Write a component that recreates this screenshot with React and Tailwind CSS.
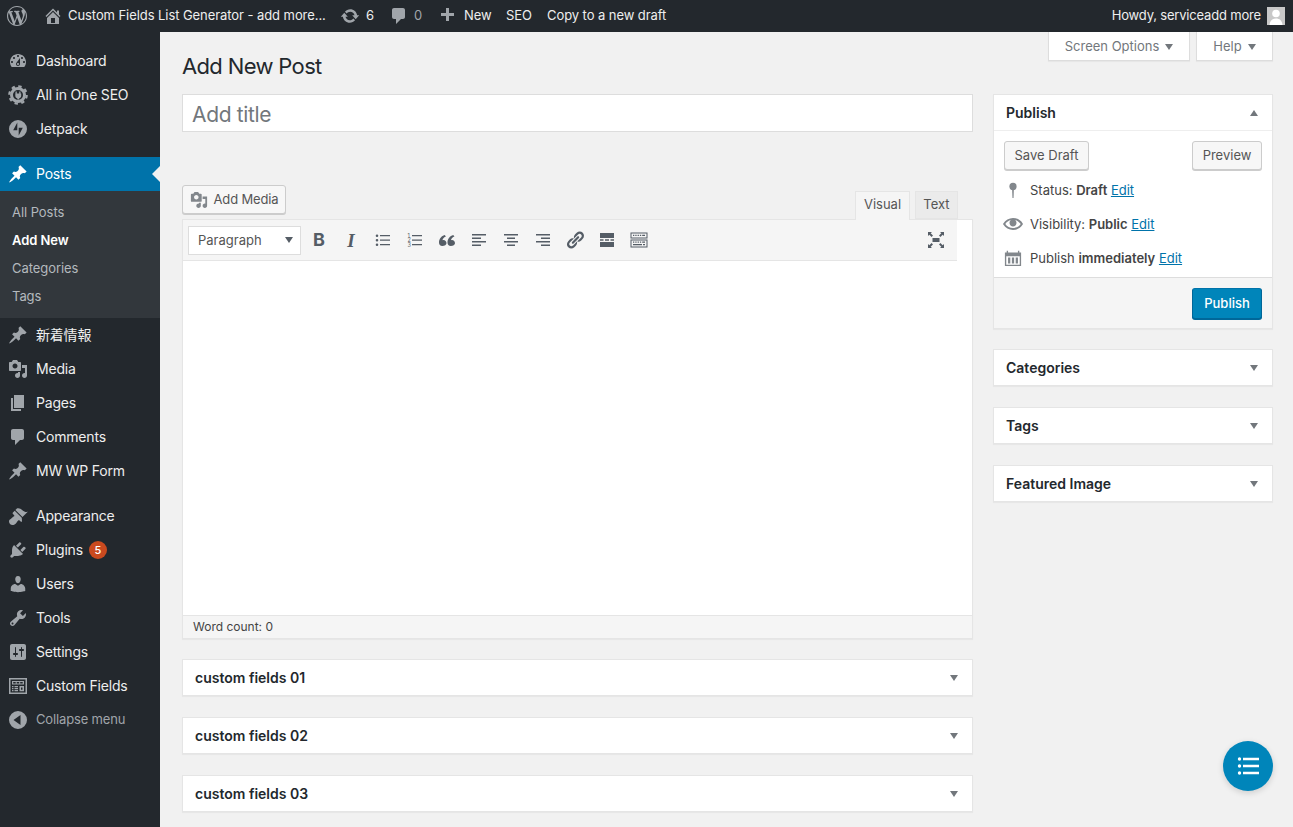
import React from "react";

const P = {
  wp: "M20 10c0-5.51-4.49-10-10-10C4.48 0 0 4.49 0 10c0 5.52 4.48 10 10 10 5.51 0 10-4.48 10-10zM7.78 15.37L4.37 6.22c.55-.02 1.17-.08 1.17-.08.5-.06.44-1.13-.06-1.11 0 0-1.45.11-2.37.11-.18 0-.37 0-.58-.01C4.12 2.69 6.87 1.11 10 1.11c2.33 0 4.45.87 6.05 2.34-.68-.11-1.65.39-1.65 1.58 0 .74.45 1.36.9 2.1.35.61.55 1.36.55 2.46 0 1.49-1.4 5-1.4 5l-3.03-8.37c.54-.02.82-.17.82-.17.5-.05.44-1.25-.06-1.22 0 0-1.44.12-2.38.12-.87 0-2.33-.12-2.33-.12-.5-.03-.56 1.2-.06 1.22l.92.08 1.26 3.41zM17.41 10c.24-.64.74-1.87.43-4.25.7 1.29 1.05 2.71 1.05 4.25 0 3.29-1.73 6.24-4.4 7.78.97-2.59 1.94-5.2 2.92-7.78zM6.1 18.09C3.12 16.65 1.11 13.53 1.11 10c0-1.3.23-2.48.72-3.59C3.25 10.3 4.67 14.2 6.1 18.09zm4.03-6.63l2.58 6.98c-.86.29-1.76.45-2.71.45-.79 0-1.57-.11-2.29-.33.81-2.38 1.62-4.74 2.42-7.1z",
  home: "M16 8.5l1.53 1.53-1.06 1.06L10 4.62l-6.47 6.47-1.06-1.06L10 2.5l4 4v-2h2v4zm-6-2.46l6 5.99V18H4v-5.97zM12 17v-5H8v5h4z",
  update: "M10.2 3.28c3.53 0 6.43 2.61 6.92 6h2.08l-3.5 4-3.5-4h2.32c-.45-1.97-2.21-3.45-4.32-3.45-1.45 0-2.73.71-3.54 1.78L4.95 5.66C6.23 4.2 8.11 3.28 10.2 3.28zm-.4 13.44c-3.52 0-6.43-2.61-6.92-6H.8l3.5-4c1.17 1.33 2.33 2.67 3.5 4H5.48c.45 1.97 2.21 3.45 4.32 3.45 1.45 0 2.73-.71 3.54-1.78l1.71 1.95c-1.28 1.46-3.15 2.38-5.25 2.38z",
  comment: "M5 2h9c1.1 0 2 .9 2 2v7c0 1.1-.9 2-2 2h-2l-5 5v-5H5c-1.1 0-2-.9-2-2V4c0-1.1.9-2 2-2z",
  plus: "M17 7v3h-5v5H9v-5H4V7h5V2h3v5h5z",
  dashboard: "M3.76 16h12.48c1.1-1.37 1.76-3.11 1.76-5 0-4.42-3.58-8-8-8s-8 3.58-8 8c0 1.89.66 3.63 1.76 5zM10 4c.55 0 1 .45 1 1s-.45 1-1 1-1-.45-1-1 .45-1 1-1zM6 6c.55 0 1 .45 1 1s-.45 1-1 1-1-.45-1-1 .45-1 1-1zm8 0c.55 0 1 .45 1 1s-.45 1-1 1-1-.45-1-1 .45-1 1-1zm-5.37 5.55L12 7v6c0 1.1-.9 2-2 2s-2-.9-2-2c0-.57.24-1.08.63-1.45zM4 10c.55 0 1 .45 1 1s-.45 1-1 1-1-.45-1-1 .45-1 1-1zm12 0c.55 0 1 .45 1 1s-.45 1-1 1-1-.45-1-1 .45-1 1-1zm-5 3c0-.55-.45-1-1-1s-1 .45-1 1 .45 1 1 1 1-.45 1-1z",
  jetpack: "M10 1a9 9 0 1 0 0 18 9 9 0 0 0 0-18zM9.3 11.2H5.2l4.1-7.6v7.6zm1.4 5.2V8.8h4.1l-4.1 7.6z",
  pin: "M10.44 3.02l1.82-1.82 6.36 6.35-1.83 1.82c-1.05-.68-2.48-.57-3.41.36l-.75.75c-.92.93-1.04 2.35-.35 3.41l-1.83 1.82-2.41-2.41-2.8 2.79c-.42.42-3.38 2.71-3.8 2.29s1.86-3.39 2.28-3.81l2.79-2.79L4.1 9.36l1.83-1.82c1.05.69 2.48.57 3.4-.36l.75-.75c.93-.92 1.05-2.35.36-3.41z",
  media: "M13 11V4c0-.55-.45-1-1-1h-1.67L9 1H5L3.67 3H2c-.55 0-1 .45-1 1v7c0 .55.45 1 1 1h10c.55 0 1-.45 1-1zM7 4.5c1.38 0 2.5 1.12 2.5 2.5S8.38 9.5 7 9.5 4.5 8.38 4.5 7 5.62 4.5 7 4.5zM14 6h5v10.5c0 1.38-1.12 2.5-2.5 2.5S14 17.88 14 16.5s1.12-2.5 2.5-2.5c.17 0 .34.02.5.05V9h-3V6zm-4 8.05V13h2v3.5c0 1.38-1.12 2.5-2.5 2.5S7 17.88 7 16.5 8.12 14 9.5 14c.17 0 .34.02.5.05z",
  page: "M6 15V2h10v13H6zm-1 1h8v2H3V5h2v11z",
  appearance: "M14.48 11.06L7.41 3.99l1.5-1.5c.5-.56 2.3-.47 3.51.32 1.21.8 1.43 1.28 2.91 2.1 1.18.64 2.45 1.26 4.45.85zm-.71.71L6.7 4.7 4.93 6.47c-.39.39-.39 1.02 0 1.41l1.06 1.06c.39.39.39 1.03 0 1.42-.6.6-1.43 1.11-2.21 1.69-.35.26-.7.53-1.01.84C1.43 13.23 1 14.37 1 15.5 1 17.43 2.57 19 4.5 19c1.13 0 2.27-.43 3.13-1.28.31-.31.58-.66.84-1.01.58-.78 1.09-1.61 1.69-2.21.39-.39 1.03-.39 1.42 0l1.06 1.06c.39.39 1.02.39 1.41 0z",
  plugin: "M13.11 4.36L9.87 7.6 8 5.73l3.24-3.24c.35-.34 1.05-.2 1.56.32.52.51.66 1.21.31 1.55zm-8 1.77l.91-1.12 9.01 9.01-1.19.84c-.71.71-2.63 1.16-3.82 1.16H6.14L4.9 17.26c-.59.59-1.54.59-2.12 0-.59-.58-.59-1.53 0-2.12l1.24-1.24v-3.88c0-1.13.4-3.19 1.09-3.89zm7.26 3.97l3.24-3.24c.34-.35 1.04-.21 1.55.31.52.51.66 1.21.31 1.55l-3.24 3.25z",
  users: "M10 9.25c-2.27 0-2.73-3.44-2.73-3.44C7 4.02 7.82 2 9.97 2c2.16 0 2.98 2.02 2.71 3.81 0 0-.41 3.44-2.68 3.44zm0 2.57L12.72 10c2.39 0 4.52 2.33 4.52 4.53v2.49s-3.65 1.13-7.24 1.13c-3.65 0-7.24-1.13-7.24-1.13v-2.49c0-2.25 1.94-4.48 4.47-4.48z",
  tools: "M16.68 9.77c-1.34 1.34-3.3 1.67-4.95.99l-5.41 6.52c-.99.99-2.59.99-3.58 0s-.99-2.59 0-3.57l6.52-5.42c-.68-1.65-.35-3.61.99-4.95 1.28-1.28 3.12-1.62 4.72-1.06l-2.89 2.89 2.82 2.82 2.86-2.87c.53 1.58.18 3.39-1.08 4.65zM3.81 16.21c.4.39 1.04.39 1.43 0 .4-.4.4-1.04 0-1.43-.39-.4-1.03-.4-1.43 0-.39.39-.39 1.03 0 1.43z",
  settings: "M18 16V4c0-1.1-.9-2-2-2H4c-1.1 0-2 .9-2 2v12c0 1.1.9 2 2 2h12c1.1 0 2-.9 2-2zM8 11h1c.55 0 1 .45 1 1s-.45 1-1 1H8v1.5c0 .28-.22.5-.5.5s-.5-.22-.5-.5V13H6c-.55 0-1-.45-1-1s.45-1 1-1h1V5.5c0-.28.22-.5.5-.5s.5.22.5.5V11zm5-2h-1c-.55 0-1-.45-1-1s.45-1 1-1h1V5.5c0-.28.22-.5.5-.5s.5.22.5.5V7h1c.55 0 1 .45 1 1s-.45 1-1 1h-1v5.5c0 .28-.22.5-.5.5s-.5-.22-.5-.5V9z",
  fields: "M1 2h18v16H1V2zm1.5 1.500v13h15v-13h-15zM4 5h12v3.500H4V5zm1.200 1v1.500h2.500V6H5.200zm3.500 0v1.500h2.500V6H8.700zm3.500 0v1.500h2.500V6h-2.500zM4 10h1.500v1.200H4V10zm2.500 0H10v1.200H6.500V10zM4 12h1.500v1.200H4V12zm2.500 0H10v1.200H6.500V12zM4 14h1.500v1.200H4V14zm2.500 0H10v1.200H6.500V14zm5-4H16v5.200h-4.500V10zm1.500 1.500v2.200h1.500v-2.200H13z",
  collapse: "M10 1a9 9 0 1 0 0 18 9 9 0 0 0 0-18zm2.500 4v10l-7-5 7-5z",
  eye: "M19.7 9.4C17.7 6 14 3.9 10 3.9S2.3 6 .3 9.4L0 10l.3.6c2 3.4 5.7 5.5 9.7 5.5s7.7-2.1 9.7-5.5l.3-.6-.3-.6zM10 14.1c-3.1 0-6-1.6-7.700-4.100C3.600 8 5.700 6.600 8 6.100c-.9.6-1.500 1.700-1.500 2.900 0 1.900 1.600 3.500 3.500 3.500s3.500-1.600 3.500-3.500c0-1.200-.6-2.300-1.500-2.900 2.300.5 4.400 1.900 5.700 3.900-1.700 2.500-4.600 4.100-7.700 4.100z",
  calendar: "M1 4h2V2h1.500v2h11V2H17v2h2v15H1V4zm1.500 4v9.500h15V8h-15zM4.500 9.500H7V16H4.500V9.500zm4.250 0h2.500V16h-2.500V9.500zm4.250 0h2.500V16H13V9.500z",
  quote: "M9.490 13.220c0-1.860-1.270-3.180-3.020-3.180-.35 0-.72.05-1.030.15.3-1.500 1.800-3.150 3.500-3.670L7.700 5C4.500 5.900 2 8.900 2 12.400 2 14.500 3.200 16 5.300 16c2.300 0 4.190-1.150 4.190-2.780zm8.510 0c0-1.860-1.270-3.180-3.020-3.180-.35 0-.72.05-1.030.15.3-1.500 1.800-3.150 3.500-3.670L16.200 5c-3.200.9-5.700 3.900-5.700 7.400 0 2.100 1.200 3.600 3.300 3.600 2.300 0 4.200-1.150 4.200-2.780z",
  link: "M17.740 2.760c1.680 1.690 1.680 4.410 0 6.100l-1.530 1.520c-1.120 1.120-2.700 1.500-4.130 1.130l2.520-2.520.76-.76.76-.75c.84-.85.84-2.210 0-3.050-.85-.84-2.210-.84-3.050 0l-.76.75-.76.77-2.520 2.510c-.37-1.430.01-3 1.130-4.130l1.530-1.520c1.680-1.690 4.410-1.690 6.050-.05zM8.590 13.430l5.340-5.340c.42-.42.42-1.100 0-1.520-.44-.43-1.130-.39-1.530 0l-5.330 5.340c-.42.42-.42 1.100 0 1.520.44.430 1.130.39 1.520 0zm-.76 2.290l4.140-4.140c.38 1.430-.01 3-1.120 4.130l-1.530 1.520c-1.680 1.690-4.410 1.690-6.090 0-1.680-1.680-1.680-4.410 0-6.090l1.530-1.530c1.120-1.120 2.700-1.500 4.130-1.130l-2.520 2.520-.76.76-.76.76c-.84.840-.84 2.200 0 3.040.85.850 2.210.850 3.050 0z",
  full: "M6.500 8h7v4h-7V8zM2 2h4L4.700 3.300 7 5.600 5.600 7 3.300 4.700 2 6V2zm16 0v4l-1.300-1.300L14.400 7 13 5.600l2.300-2.300L14 2h4zM2 18v-4l1.300 1.300L5.600 13 7 14.400l-2.300 2.300L6 18H2zm16 0h-4l1.300-1.300L13 14.400 14.400 13l2.300 2.300L18 14v4z",
  keyboard: "M1.500 2.500h17v6h-17v-6zm1 1v4h15v-4h-15zM4 4.800h1.300v1.300H4V4.800zm2.300 0h1.300v1.300H6.300V4.800zm2.300 0h1.300v1.300H8.600V4.800zm2.300 0h1.300v1.300h-1.300V4.800zm2.300 0h2.800v1.300h-2.800V4.800zM1.500 9.500h17v8h-17v-8zm1 1v6h15v-6h-15zM4 11.500h1.300v1.300H4v-1.300zm2.300 0h1.300v1.300H6.300v-1.300zm2.300 0h1.300v1.300H8.600v-1.300zm2.300 0h1.300v1.300h-1.300v-1.300zm2.300 0h2.800v1.300h-2.800v-1.300zM4 14h9v1.300H4V14zm10 0h2v1.300h-2V14z",
};

const Ic = ({ d, s = 20, c = "text-[#a0a5aa]", rule = "evenodd" }) => (
  <svg viewBox="0 0 20 20" width={s} height={s} fill="currentColor" className={`shrink-0 ${c}`}>
    <path d={d} fillRule={rule} clipRule={rule} />
  </svg>
);

const Gear = () => (
  <svg viewBox="0 0 20 20" width="20" height="20" className="shrink-0 text-[#a0a5aa]">
    <circle cx="10" cy="10" r="6.500" fill="none" stroke="currentColor" strokeWidth="3" />
    <circle cx="10" cy="10" r="8.700" fill="none" stroke="currentColor" strokeWidth="2.200" strokeDasharray="3.400 3.430" />
    <path d="M7.500 6.500h1.300v2h2.400v-2h1.300v2h.7v2.200c0 1.300-.9 2.300-2 2.500v1.300H9.300v-1.300c-1.100-.2-2-1.200-2-2.500V8.500h.2z" fill="currentColor" />
  </svg>
);

const Caret = ({ up, c = "border-[#72777c]" }) => (
  <span className={`inline-block w-0 h-0 border-x-[4px] border-x-transparent ${up ? "border-b-[6px]" : "border-t-[6px]"} ${c}`} />
);

const Top = ({ ic, children, className = "" }) => (
  <div className={`flex items-center shrink-0 ${className}`}>{ic}{children}</div>
);

const menu1 = [
  ["Dashboard", <Ic d={P.dashboard} />],
  ["All in One SEO", <Gear />],
  ["Jetpack", <Ic d={P.jetpack} />],
];
const menu2 = [
  ["新着情報", <Ic d={P.pin} />],
  ["Media", <Ic d={P.media} />],
  ["Pages", <Ic d={P.page} />],
  ["Comments", <Ic d={P.comment} />],
  ["MW WP Form", <Ic d={P.pin} />],
];
const menu3 = [
  ["Appearance", <Ic d={P.appearance} />],
  ["Plugins", <Ic d={P.plugin} />, "5"],
  ["Users", <Ic d={P.users} />],
  ["Tools", <Ic d={P.tools} />],
  ["Settings", <Ic d={P.settings} />],
  ["Custom Fields", <Ic d={P.fields} />],
];

const Item = ({ label, icon, badge }) => (
  <div className="h-[34px] flex items-center pl-2 text-[14px] tracking-[-0.2px] text-[#eee]">
    <span className="w-7 flex shrink-0">{icon}</span>
    <span className="pb-[2px]">{label}</span>
    {badge && (
      <span className="ml-[6px] w-[18px] h-[18px] rounded-full bg-[#ca4a1f] text-white text-[11px] font-medium flex items-center justify-center">{badge}</span>
    )}
  </div>
);

const Sub = ({ children, className = "" }) => (
  <div className={`h-7 flex items-center pl-3 pt-[2px] ${className}`}>{children}</div>
);

const Sidebar = () => (
  <aside className="w-40 shrink-0 bg-[#23282d] pt-3">
    {menu1.map(([l, i]) => <Item key={l} label={l} icon={i} />)}
    <div className="relative mt-[11px] h-[34px] bg-[#0073aa] flex items-center pl-2 text-[14px] tracking-[-0.2px] text-white">
      <span className="w-7 flex"><Ic d={P.pin} c="text-white" /></span>
      <span className="pb-[2px]">Posts</span>
      <span className="absolute right-0 top-[9px] w-0 h-0 border-y-[8px] border-y-transparent border-r-[8px] border-r-[#f1f1f1]" />
    </div>
    <div className="bg-[#32373c] pt-[7px] pb-2 text-[13px] tracking-[-0.06px] text-[#b4b9be]">
      <Sub>All Posts</Sub>
      <Sub className="text-white font-semibold">Add New</Sub>
      <Sub>Categories</Sub>
      <Sub>Tags</Sub>
    </div>
    {menu2.map(([l, i]) => <Item key={l} label={l} icon={i} />)}
    <div className="h-[11px]" />
    {menu3.map(([l, i, b]) => <Item key={l} label={l} icon={i} badge={b} />)}
    <div className="h-[34px] flex items-center pl-2 text-[13px] tracking-[-0.15px] text-[#a0a5aa]">
      <span className="w-7 flex"><Ic d={P.collapse} /></span>
      <span>Collapse menu</span>
    </div>
  </aside>
);

const Btn = ({ children, className = "" }) => (
  <div className={`h-[29px] flex items-center justify-center bg-[#f7f7f7] border border-[#ccc] rounded-[3px] shadow-[0_1px_0_#ccc] text-[13px] text-[#555] ${className}`}>{children}</div>
);

const Box = ({ title, up, children, className = "" }) => (
  <section className={`bg-white border border-[#e5e5e5] shadow-[0_1px_1px_rgba(0,0,0,0.04)] ${className}`}>
    <div className="h-[35px] flex items-center justify-between pl-3 pr-[14px]">
      <span className="text-[14px] font-semibold text-[#23282d]">{title}</span>
      <Caret up={up} />
    </div>
    {children}
  </section>
);

const TB = ({ children }) => (
  <div className="w-8 h-5 flex items-center justify-center text-[#555d66]">{children}</div>
);

const Lines = ({ d }) => (
  <svg viewBox="0 0 20 20" width="20" height="20" fill="currentColor"><path d={d} fillRule="evenodd" /></svg>
);

const Toolbar = () => (
  <div className="mr-[15px] h-[41px] bg-[#f5f5f5] border-b border-[#e5e5e5] flex items-center pl-[5px] pr-[5px]">
    <div className="w-[113px] h-[29px] bg-white border border-[#ddd] flex items-center justify-between pl-[9px] pr-[7px] text-[13px] text-[#555]">
      <span className="pt-[1px]">Paragraph</span><Caret c="border-[#555d66]" />
    </div>
    <div className="ml-[2px] flex items-center">
      <TB><span className="text-[18px] font-bold leading-none">B</span></TB>
      <TB><span className="text-[19px] font-bold italic font-['Liberation_Serif',serif] leading-none">I</span></TB>
      <TB><Lines d="M4 4.500a1.300 1.300 0 1 1 0 2.600 1.300 1.300 0 0 1 0-2.600zm0 4.500a1.300 1.300 0 1 1 0 2.600 1.300 1.300 0 0 1 0-2.600zm0 4.500a1.300 1.300 0 1 1 0 2.600 1.300 1.300 0 0 1 0-2.600zM7 5h10v1.300H7V5zm0 4.500h10v1.300H7V9.500zM7 14h10v1.300H7V14z" /></TB>
      <TB>
        <svg viewBox="0 0 20 20" width="20" height="20" fill="currentColor">
          <path d="M7 5h10v1.300H7V5zm0 4.500h10v1.300H7V9.500zM7 14h10v1.300H7V14z" />
          <text x="2.500" y="7.500" fontSize="5.500" fontFamily="Inter">1</text>
          <text x="2.500" y="12" fontSize="5.500" fontFamily="Inter">2</text>
          <text x="2.500" y="16.500" fontSize="5.500" fontFamily="Inter">3</text>
        </svg>
      </TB>
      <TB><Lines d={P.quote} /></TB>
      <TB><Lines d="M3 4h14v1.500H3V4zm0 3.500h9V9H3V7.500zM3 11h14v1.500H3V11zm0 3.500h9V16H3v-1.500z" /></TB>
      <TB><Lines d="M3 4h14v1.500H3V4zm3 3.500h8V9H6V7.500zM3 11h14v1.500H3V11zm3 3.500h8V16H6v-1.500z" /></TB>
      <TB><Lines d="M3 4h14v1.500H3V4zm5 3.500h9V9H8V7.500zM3 11h14v1.500H3V11zm5 3.500h9V16H8v-1.500z" /></TB>
      <TB><Lines d={P.link} /></TB>
      <TB><Lines d="M3 3h14v5H3V3zm0 6.300h3.500v1.400H3V9.300zm5 0h4v1.400H8V9.300zm5.500 0H17v1.400h-3.500V9.300zM3 12h14v5H3v-5z" /></TB>
      <TB><Lines d={P.keyboard} /></TB>
    </div>
    <div className="ml-auto w-8 flex justify-center text-[#555d66]">
      <Lines d={P.full} />
    </div>
  </div>
);

const Meta = ({ label }) => <Box title={label} />;

export default function App() {
  return (
    <div className="h-[827px] w-[1293px] overflow-hidden flex flex-col bg-[#f1f1f1] font-['Inter','Noto_Sans_CJK_JP',sans-serif] relative">
      <header className="h-8 shrink-0 bg-[#23282d] flex items-center text-[13px] tracking-[-0.07px] text-[#eee]">
        <div className="pl-[7px] w-[43px] flex"><Ic d={P.wp} /></div>
        <Top ic={<Ic d={P.home} s={20} />} className="w-[297px] gap-[5px]">
          <span>Custom Fields List Generator - add more...</span>
        </Top>
        <Top ic={<Ic d={P.update} s={20} />} className="w-[49px] gap-[6px]"><span>6</span></Top>
        <Top ic={<Ic d={P.comment} s={20} />} className="w-[48px] gap-[5px]"><span className="text-[#a0a5aa]">0</span></Top>
        <Top ic={<Ic d={P.plus} s={20} />} className="w-[69px] gap-[7px]"><span>New</span></Top>
        <span className="w-[41px]">SEO</span>
        <span>Copy to a new draft</span>
        <div className="ml-auto flex items-center pr-2 gap-[6px]">
          <span className="tracking-[-0.18px]">Howdy, serviceadd more</span>
          <div className="w-[18px] h-[18px] bg-[#c8c8c8] overflow-hidden">
            <svg viewBox="0 0 18 18" width="18" height="18" fill="#fff"><circle cx="9" cy="6.500" r="3.800" /><path d="M2.500 18c.5-4.500 3-6.500 6.500-6.500s6 2 6.500 6.500z" /></svg>
          </div>
        </div>
      </header>
      <div className="flex-1 flex min-h-0">
        <Sidebar />
        <main className="flex-1 pl-[22px] pr-5 min-w-0">
          <div className="flex justify-end gap-[6px] h-[29px] text-[13px] text-[#72777c]">
            <div className="w-[142px] h-[29px] pt-[1px] bg-white border border-t-0 border-[#ddd] shadow-[0_1px_1px_rgba(0,0,0,0.04)] flex items-center justify-center gap-[6px]">
              Screen Options <Caret c="border-[#72777c]" />
            </div>
            <div className="w-[77px] h-[29px] pt-[1px] bg-white border border-t-0 border-[#ddd] shadow-[0_1px_1px_rgba(0,0,0,0.04)] flex items-center justify-center gap-[6px]">
              Help <Caret c="border-[#72777c]" />
            </div>
          </div>
          <h1 className="-mt-[10px] text-[22px] tracking-[-0.65px] leading-[30px] text-[#23282d] font-normal">Add New Post</h1>
          <div className="mt-[13px] flex gap-5">
            <div className="w-[791px] shrink-0">
              <div className="h-[38px] bg-white border border-[#ddd] flex items-center pl-[9px] pt-[3px] text-[21px] tracking-[-0.35px] text-[#72777c]">Add title</div>
              <div className="mt-[53px] h-[34px] flex justify-between items-start pr-[15px]">
                <Btn className="w-[104px] h-[28px] gap-[6px] tracking-[-0.15px]"><Ic d={P.media} s={18} c="text-[#82878c]" /><span>Add Media</span></Btn>
                <div className="flex gap-[5px] mt-[6px] text-[13px] text-[#555]">
                  <div className="w-[55px] h-[29px] pb-[2px] bg-[#f5f5f5] border border-b-0 border-[#e5e5e5] flex items-center justify-center">Visual</div>
                  <div className="w-[43px] h-[28px] bg-[#ebebeb] border border-[#e5e5e5] flex items-center justify-center">Text</div>
                </div>
              </div>
              <div className="bg-white border border-[#e5e5e5] shadow-[0_1px_1px_rgba(0,0,0,0.04)]">
                <Toolbar />
                <div className="h-[354px]" />
                <div className="h-[23px] bg-[#f5f5f5] border-t border-[#e5e5e5] flex items-center pl-[10px] text-[12px] text-[#444]">Word count: 0</div>
              </div>
              <div className="mt-5 flex flex-col gap-[21px]">
                <Meta label="custom fields 01" />
                <Meta label="custom fields 02" />
                <Meta label="custom fields 03" />
              </div>
            </div>
            <div className="w-[280px] shrink-0 flex flex-col">
              <Box title="Publish" up className="mb-5">
                <div className="border-t border-[#eee] pt-[10px] px-[10px] flex justify-between">
                  <Btn className="w-[85px]">Save Draft</Btn>
                  <Btn className="w-[70px]">Preview</Btn>
                </div>
                <div className="mt-[3px] text-[13px] text-[#444]">
                  <div className="h-[34px] flex items-center pl-[10px]">
                    <span className="w-[26px] flex"><svg viewBox="0 0 20 20" width="18" height="18" fill="#82878c"><circle cx="10" cy="6" r="4" /><path d="M9 9h2l-.4 10h-1.200z" /></svg></span>
                    <span className="pt-[2px]">Status: <b className="font-semibold">Draft</b> <a className="text-[#0073aa] underline">Edit</a></span>
                  </div>
                  <div className="h-[34px] flex items-center pl-[10px]">
                    <span className="w-[26px] flex -ml-[1px] mr-[1px]"><Ic d={P.eye} c="text-[#82878c]" /></span>
                    <span className="pt-[2px]">Visibility: <b className="font-semibold">Public</b> <a className="text-[#0073aa] underline">Edit</a></span>
                  </div>
                  <div className="h-[34px] flex items-center pl-[10px]">
                    <span className="w-[26px] flex"><Ic d={P.calendar} s={18} c="text-[#82878c]" /></span>
                    <span className="pt-[2px]">Publish <b className="font-semibold">immediately</b> <a className="text-[#0073aa] underline">Edit</a></span>
                  </div>
                </div>
                <div className="mt-[2px] h-[51px] bg-[#f5f5f5] border-t border-[#ddd] flex justify-end items-center pr-[10px]">
                  <div className="w-[70px] h-[31px] pt-[1px] bg-[#0085ba] border border-[#006799] border-t-[#0073aa] rounded-[3px] shadow-[0_1px_0_#006799] flex items-center justify-center text-white text-[13px] font-medium">Publish</div>
                </div>
              </Box>
              <div className="flex flex-col gap-[21px]">
                <Meta label="Categories" />
                <Meta label="Tags" />
                <Meta label="Featured Image" />
              </div>
            </div>
          </div>
        </main>
      </div>
      <div className="absolute left-[1223px] top-[741px] w-[50px] h-[50px] rounded-full bg-[#0085ba] shadow-[0_2px_6px_rgba(0,0,0,0.15)] flex items-center justify-center">
        <svg viewBox="0 0 24 24" width="24" height="24" fill="#fff">
          <circle cx="3.500" cy="5" r="1.700" /><circle cx="3.500" cy="12" r="1.700" /><circle cx="3.500" cy="19" r="1.700" />
          <path d="M7 3.800h16v2.400H7zM7 10.800h16v2.400H7zM7 17.800h16v2.400H7z" />
        </svg>
      </div>
    </div>
  );
}
